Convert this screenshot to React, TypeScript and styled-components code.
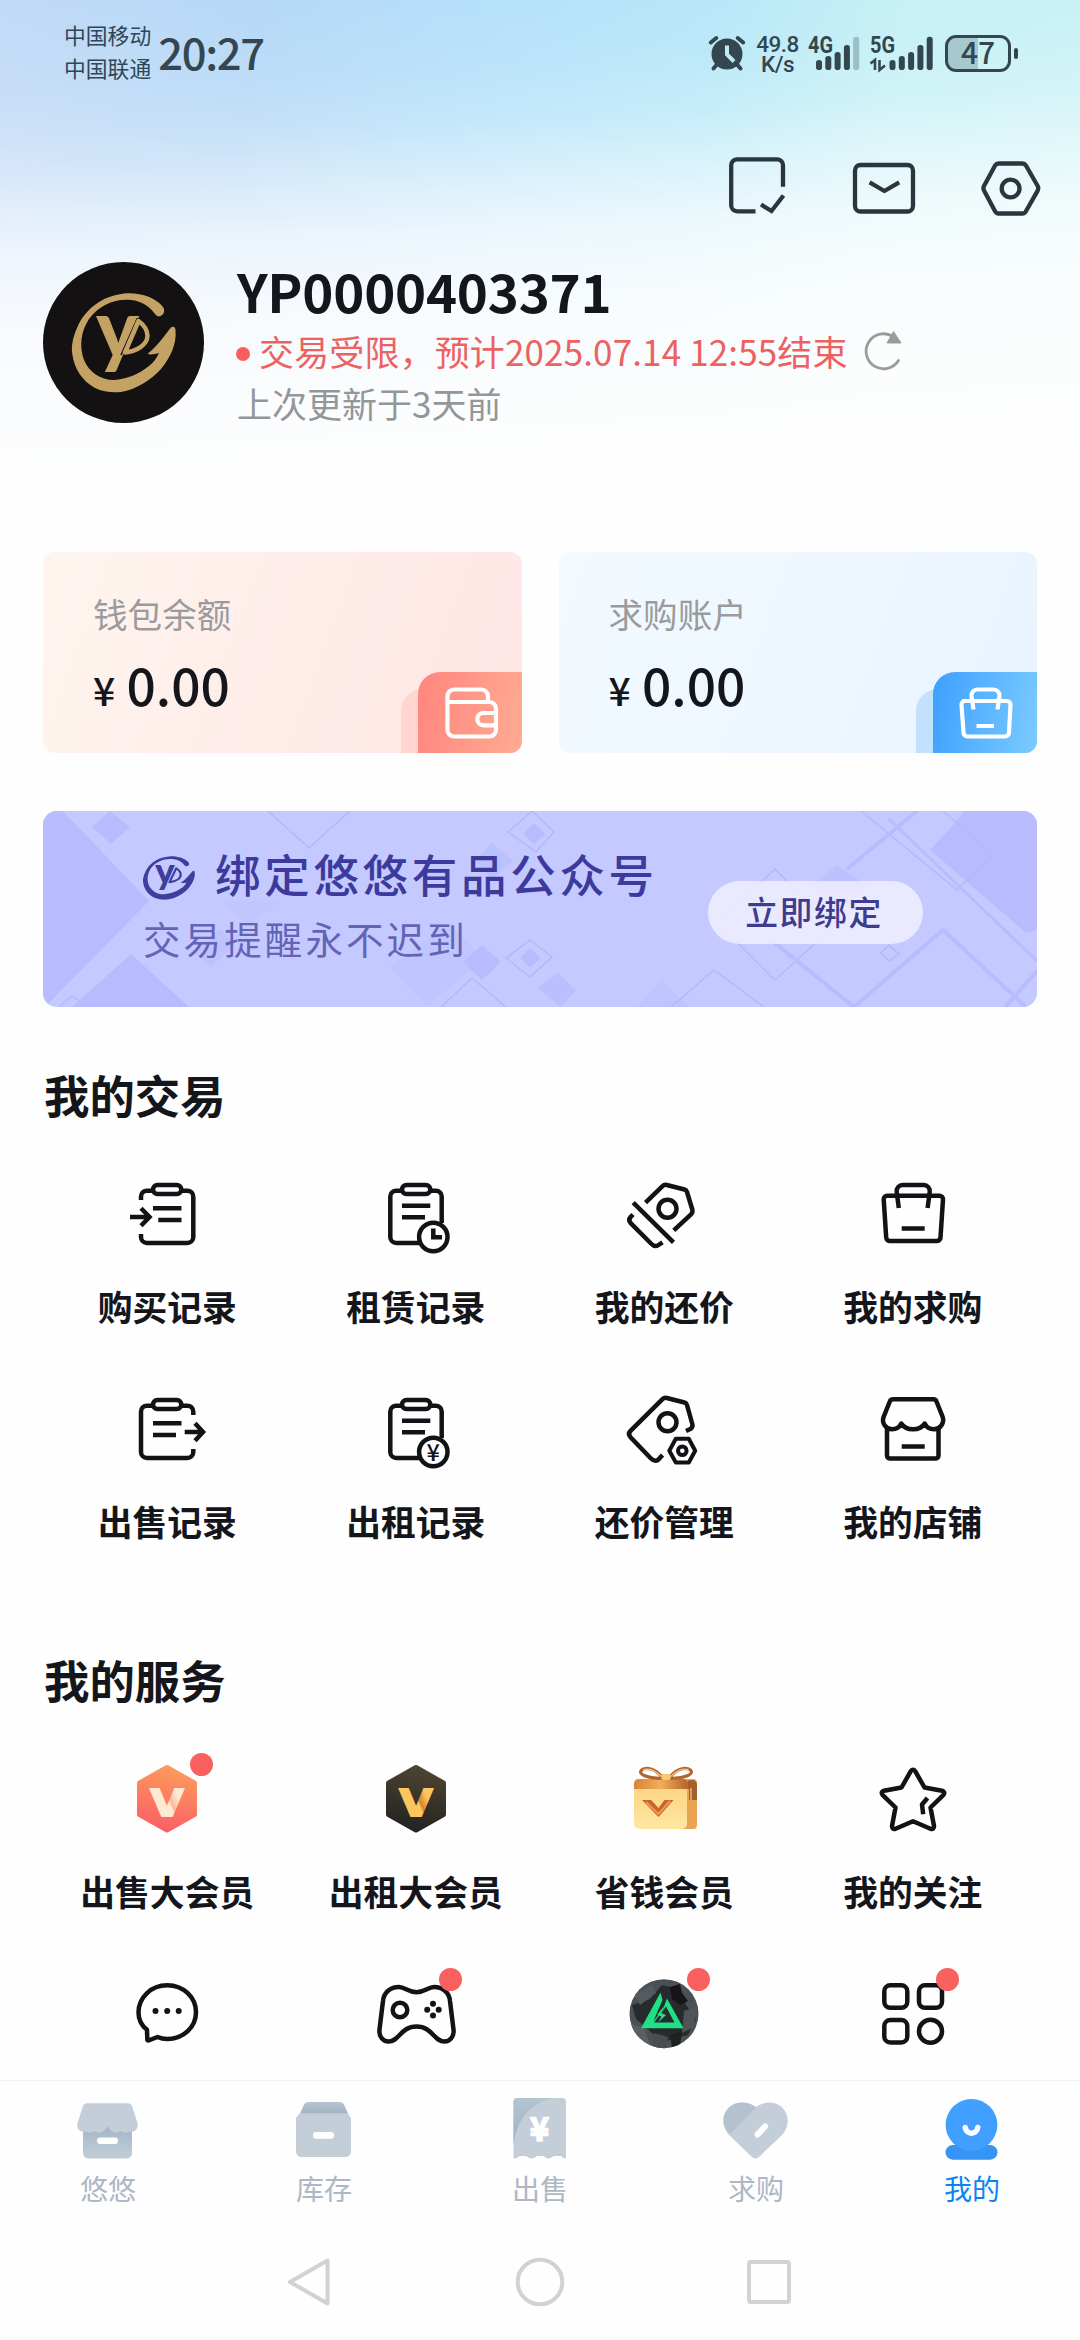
import React from "react";
import styled, { createGlobalStyle } from "styled-components";

const GlobalStyle = createGlobalStyle`
  * { box-sizing: border-box; }
  body {
    margin: 0;
    background: #fff;
    font-family: "Noto Sans CJK SC", "Noto Sans", sans-serif;
    color: #14161b;
  }
  svg { display: block; flex: none; overflow: visible; }
`;

/* ---------- page shell ---------- */

const Screen = styled.div`
  width: 1080px;
  height: 2340px;
  display: flex;
  flex-direction: column;
  overflow: hidden;
  background: #fefefe;
`;

const Content = styled.main`
  height: 2080px;
  flex: none;
  overflow: hidden;
  background:
    linear-gradient(177deg, rgba(254, 254, 254, 0) 0, rgba(254, 254, 254, 0.1) 90px, rgba(254, 254, 254, 0.24) 145px, rgba(254, 254, 254, 0.5) 200px, rgba(254, 254, 254, 0.75) 255px, rgba(254, 254, 254, 0.9) 330px, #fefefe 500px),
    linear-gradient(97deg, #c1daf6 0, #b5d8f6 260px, #b3e1fa 520px, #b5e7f8 720px, #c3f0f5 900px, #c6f1f5 1080px);
`;

/* ---------- system status bar ---------- */

const StatusBar = styled.header`
  height: 106px;
  padding: 0 62px 0 64px;
  display: flex;
  align-items: center;
  color: #34464f;
`;

const Carriers = styled.div`
  display: flex;
  flex-direction: column;
  padding-bottom: 4px;
  font-size: 21.8px;
  line-height: 33px;
  color: #2f4658;
`;

const Clock = styled.div`
  margin-left: 7px;
  padding-bottom: 3px;
  font-size: 43.5px;
  line-height: 50px;
  font-weight: 500;
  letter-spacing: -1.3px;
`;

const StatusIcons = styled.div`
  margin-left: auto;
  display: flex;
  align-items: center;
  gap: 10px;
`;

const Speed = styled.div`
  width: 41px;
  padding-top: 2px;
  display: flex;
  flex-direction: column;
  align-items: center;
  font-family: Roboto, sans-serif;
  font-size: 22.5px;
  line-height: 20.5px;
  font-weight: 500;
  letter-spacing: -0.5px;
  white-space: nowrap;
`;

const Battery = styled.div`
  display: flex;
  align-items: center;
  gap: 3px;
`;

const BatteryBody = styled.div`
  width: 66px;
  height: 37px;
  border: 3px solid #34464f;
  border-radius: 11px;
  display: flex;
  align-items: center;
  justify-content: center;
  background: linear-gradient(90deg, #a5c9cf 0 50%, transparent 50%);
  font-size: 30px;
  font-weight: 500;
  line-height: 30px;
  padding-bottom: 4px;
`;

const BatteryNub = styled.div`
  width: 4px;
  height: 11px;
  border-radius: 2px;
  background: #34464f;
`;

/* ---------- header ---------- */

const Actions = styled.div`
  padding: 49px 37px 0 0;
  display: flex;
  justify-content: flex-end;
  gap: 63px;
`;

const Profile = styled.section`
  height: 161px;
  margin-top: 43px;
  padding-left: 43px;
  display: flex;
  gap: 33px;
`;

const Avatar = styled.div`
  width: 161px;
  height: 161px;
  border-radius: 50%;
  background: #131112;
  overflow: hidden;
`;

const ProfileText = styled.div`
  display: flex;
  flex-direction: column;
`;

const UserName = styled.h1`
  margin: 0;
  font-size: 52.8px;
  line-height: 56px;
  font-weight: 700;
  letter-spacing: -0.25px;
`;

const Restriction = styled.div`
  margin-top: 11px;
  height: 44px;
  display: flex;
  align-items: center;
  font-size: 35px;
  line-height: 44px;
  letter-spacing: 0.14px;
  white-space: nowrap;
  color: #ec6161;
`;

const StatusDot = styled.span`
  width: 14px;
  height: 14px;
  margin: 5px 9px 0 -1px;
  border-radius: 50%;
  background: #fa5f60;
`;

const Updated = styled.div`
  margin-top: 8px;
  font-size: 35px;
  line-height: 44px;
  color: #949698;
`;

/* ---------- balance cards ---------- */

const Balances = styled.section`
  margin: 129px 43px 0;
  display: grid;
  grid-template-columns: 1fr 1fr;
  gap: 37px;
`;

const BalanceCard = styled.article<{ $bg: string }>`
  position: relative;
  height: 201px;
  padding: 38px 50px 0;
  border-radius: 12px;
  overflow: hidden;
  background: ${(p) => p.$bg};
`;

const BalanceLabel = styled.div`
  font-size: 34.6px;
  line-height: 46px;
  color: #9b9b9d;
`;

const Amount = styled.div`
  margin-top: 16px;
  display: flex;
  align-items: baseline;
  font-size: 51.5px;
  line-height: 64px;
  font-weight: 500;
`;

const Currency = styled.span`
  width: 33.5px;
  font-size: 39px;
`;

const CornerShade = styled.div<{ $bg: string }>`
  position: absolute;
  right: 0;
  bottom: 0;
  width: 121px;
  height: 64px;
  border-top-left-radius: 22px;
  background: ${(p) => p.$bg};
`;

const CornerTile = styled.div<{ $bg: string }>`
  position: absolute;
  right: 0;
  bottom: 0;
  width: 104px;
  height: 81px;
  border-top-left-radius: 22px;
  background: ${(p) => p.$bg};
`;

/* ---------- banner ---------- */

const Banner = styled.section`
  position: relative;
  margin: 58px 43px 0;
  height: 196px;
  border-radius: 14px;
  overflow: hidden;
  background: #c4caff;
  display: flex;
  align-items: center;
`;

const BannerPattern = styled.svg`
  position: absolute;
  inset: 0;
`;

const BannerText = styled.div`
  position: relative;
  margin-left: 100px;
  width: 565px;
  padding-bottom: 9px;
`;

const BannerTitle = styled.div`
  display: flex;
  align-items: center;
  gap: 20px;
  font-size: 45.5px;
  line-height: 60px;
  font-weight: 500;
  letter-spacing: 3.7px;
  white-space: nowrap;
  color: #3c3a9c;
`;

const BannerMark = styled.div`
  padding-top: 10px;
`;

const BannerSub = styled.div`
  margin-top: 7px;
  font-size: 37.5px;
  line-height: 56px;
  letter-spacing: 3.1px;
  color: #6463b6;
`;

const BannerButton = styled.button`
  position: relative;
  width: 215px;
  height: 63px;
  margin-top: 7px;
  padding: 0 3px 4px 0;
  border: 0;
  border-radius: 32px;
  background: rgba(243, 244, 255, 0.78);
  font-family: inherit;
  font-size: 32.8px;
  line-height: 40px;
  font-weight: 500;
  letter-spacing: 1.6px;
  color: #3f3b8d;
`;

/* ---------- shortcut grids ---------- */

const SectionTitle = styled.h2<{ $top: number }>`
  margin: ${(p) => p.$top}px 0 0 44px;
  font-size: 45.4px;
  line-height: 60px;
  font-weight: 700;
`;

const Grid = styled.div`
  margin: 51px 43px 0;
  display: grid;
  grid-template-columns: repeat(4, 1fr);
  grid-auto-rows: 215px;
`;

const Cell = styled.div`
  display: flex;
  flex-direction: column;
  align-items: center;
  gap: 27px;
`;

const IconBox = styled.div`
  position: relative;
  width: 84px;
  height: 84px;
`;

const Badge = styled.span`
  position: absolute;
  top: -7px;
  left: 65px;
  width: 23px;
  height: 23px;
  border-radius: 50%;
  background: #f96060;
`;

const CellLabel = styled.div`
  font-size: 34.8px;
  line-height: 40px;
  font-weight: 700;
  white-space: nowrap;
`;

/* ---------- bottom bars ---------- */

const TabBar = styled.nav`
  height: 144px;
  border-top: 1px solid #f1f2f4;
  display: grid;
  grid-template-columns: repeat(5, 1fr);
`;

const Tab = styled.div<{ $active?: boolean }>`
  padding-top: 11px;
  display: flex;
  flex-direction: column;
  align-items: center;
  gap: 7px;
  font-size: 28px;
  line-height: 34px;
  color: ${(p) => (p.$active ? "#0b84f3" : "#adb7c5")};
`;

const NavBar = styled.footer`
  height: 116px;
  padding: 0 285px;
  display: flex;
  align-items: center;
  justify-content: space-between;
`;

/* ---------- drawings ---------- */

const line = {
  fill: "none",
  stroke: "#121316",
  strokeWidth: 4.5,
  strokeLinejoin: "round" as const,
};

const Icon84 = ({ children }: { children: React.ReactNode }) => (
  <svg width="84" height="84" viewBox="0 0 84 84" {...line}>
    {children}
  </svg>
);

const Logo = ({ size, color, cut, full }: { size: [number, number]; color: string; cut: string; full?: boolean }) => (
  <svg width={size[0]} height={size[1]} viewBox={full ? "0 0 161 161" : "29 31 104 100"} preserveAspectRatio="none">
    <path
      fill={color}
      d="M119 53C122 51 121.500 47 120 45C113 36 99 31 85 31.300C74 32 64 35 56 40C45 47 38 56 34 66C30 75 28 84 29.300 92C31 106 39 119 52 126C60 130 70 131 78 130C93 127.500 108 118 118 107C127 96 134 82 132.500 68C132.300 64 129 64 127.500 66C120 76 113 85 104.500 92C108 93 113 92 116 91C113 97 110 101 106 104C96 112 84 117 71 118C57 118 46 110 41 98C36 84 38 69 46 57C56 43 73 36 88 38C99 39 107 45 112 52C114 55 117 55 119 53Z"
    />
    <text
      x="53"
      y="95.500"
      fontFamily="Lato, sans-serif"
      fontWeight="900"
      fontSize="81"
      textLength="43"
      lengthAdjust="spacingAndGlyphs"
      fill={color}
    >
      y
    </text>
    <path d="M94.500 56L78 93" stroke={cut} strokeWidth="1.500" />
    <path d="M95.500 59C101 63 104.500 68 104.500 74C104 83 94 89 82 90.500Z" fill={cut} stroke={color} strokeWidth="4.500" strokeLinejoin="round" />
  </svg>
);

const AlarmIcon = () => (
  <svg width="39" height="38" viewBox="0 0 39 38">
    <g fill="none" stroke="#34464f" strokeLinecap="round">
      <circle cx="19" cy="20" r="15.500" fill="#34464f" stroke="none" />
      <path d="M2.800 8.500L8.300 4M35.200 8.500L29.700 4" strokeWidth="4" />
      <path d="M8.500 31L5.500 34.500M29.500 31L32.500 34.500" strokeWidth="4" />
      <path d="M19 11.500V20.500L26 27.500" stroke="#bfe9f5" strokeWidth="4" strokeLinecap="butt" />
    </g>
  </svg>
);

const BAR_HEIGHTS = [10, 14, 18, 25, 33.3];

const Signal = ({ label, width, offset, faded, arrows }: { label: string; width: number; offset: number; faded?: boolean; arrows?: boolean }) => (
  <svg width={width} height="36" viewBox={`0 0 ${width} 36`}>
    <text x="0" y="18" fontFamily="Roboto, sans-serif" fontWeight="700" fontSize="23" textLength="25" lengthAdjust="spacingAndGlyphs" fill="#34464f">
      {label}
    </text>
    {BAR_HEIGHTS.map((h, i) => (
      <rect key={i} x={offset + i * 9.3} y={35 - h} width="6" height={h} rx="2.800" fill={faded && i === 4 ? "#9bbfc8" : "#34464f"} />
    ))}
    {arrows && (
      <path d="M0.500 28.500L5 25V35M9.500 25V35L15 30.500" fill="none" stroke="#34464f" strokeWidth="2.600" />
    )}
  </svg>
);

const HeaderIcon = ({ children }: { children: React.ReactNode }) => (
  <svg width="64" height="64" viewBox="0 0 64 64" fill="none" stroke="#2b353e" strokeWidth="4.300" strokeLinejoin="round">
    {children}
  </svg>
);

const RefreshSvg = styled.svg`
  margin-left: 16px;
`;

const RefreshIcon = () => (
  <RefreshSvg width="40" height="42" viewBox="0 0 40 42">
    <path d="M34.500 30.500A17.500 17.500 0 1 1 29 6.500" fill="none" stroke="#9b9b9b" strokeWidth="2.800" strokeLinecap="round" />
    <path d="M29.500 1.500L37 13H23Z" fill="#9b9b9b" stroke="#9b9b9b" strokeWidth="1" strokeLinejoin="round" />
  </RefreshSvg>
);

const cardStroke = { fill: "none", stroke: "#fff", strokeWidth: 4.2, strokeLinejoin: "round" as const };

const WalletIcon = () => (
  <svg width="104" height="81" viewBox="0 0 104 81" {...cardStroke}>
    <path d="M29.500 30V24a6.500 6.500 0 0 1 6.500-6.500H63.500a6.500 6.500 0 0 1 6.500 6.500V30" />
    <path d="M29.500 30H71.500a6.500 6.500 0 0 1 6.500 6.500V58a6.500 6.500 0 0 1-6.500 6.500H36a6.500 6.500 0 0 1-6.500-6.500Z" />
    <path d="M78 41H65.500a6.200 6.200 0 0 0 0 12.400H78" />
  </svg>
);

const WhiteBagIcon = () => (
  <svg width="104" height="81" viewBox="0 0 104 81" {...cardStroke}>
    <path d="M30.500 29H74a3.500 3.500 0 0 1 3.500 3.700L76 60.500a4 4 0 0 1-4 4H34.500a4 4 0 0 1-4-4L28.500 32.700a3.500 3.500 0 0 1 3.500-3.700Z" />
    <path d="M40.500 37.500L38.500 24a6 6 0 0 1 6-6.500H60.500a6 6 0 0 1 6 6.500L64.500 37.500" />
    <path d="M43.500 54H61" />
  </svg>
);

const Pattern = () => (
  <BannerPattern width="994" height="196" viewBox="0 0 994 196">
    <g fill="#b8bcfe">
      <path d="M0 0H20L106 90L6 192L0 196Z" />
      <path d="M67 0L87 16L68 33L49 16Z" />
      <path d="M88 143L146 196H29Z" />
      <path d="M491 12L503 23L491 33L480 23Z" />
      <path d="M449 32L470 50L449 68L432 49Z" opacity=".7" />
      <path d="M439 134L458 151L439 169L420 151Z" />
      <path d="M515 162L533 179L518 196L494 177Z" opacity=".8" />
      <path d="M487 137L498 147L487 157L477 147Z" />
      <path d="M405 112L440 148L384 196L346 156Z" opacity=".35" />
      <path d="M178 90H238L206 114Z" opacity=".25" />
      <path d="M150 140L178 118L192 134L168 156Z" opacity=".5" />
      <path d="M618 169L646 196H594Z" opacity=".4" />
      <path d="M794 54L826 76L794 100L768 76Z" opacity=".7" />
      <path d="M921 0H994V119L983 122L887 39L912 12Z" />
    </g>
    <g fill="none" stroke="#b4b8f7" strokeWidth="1.500">
      <path d="M225 0L266 37L307 0" />
      <path d="M489 0L511 21L493 41L465 21Z" />
      <path d="M487 129L509 146L487 166L463 147Z" />
      <path d="M429 167L463 196M429 167L398 196" />
      <path d="M732 58L790 116L732 169L675 112Z" />
      <path d="M671 159L721 196M671 159L628 196" />
      <path d="M818 0L914 79L950 44L900 0" />
      <path d="M16 196L29 185L38 191" />
      <path d="M846 134L856 143L846 150L838 142Z" />
    </g>
    <g fill="none" stroke="#b8bcfe" strokeWidth="4">
      <path d="M874 0L804 58" />
      <path d="M728 129L811 196L900 119L983 196" />
      <path d="M846 8L994 150" strokeWidth="3" />
      <path d="M994 160L962 196" />
    </g>
  </BannerPattern>
);

const Clip = ({ x = 28 }: { x?: number }) => <rect x={x} y="10" width="28.300" height="9" rx="4.500" />;

const BuyRecord = () => (
  <Icon84>
    <path d="M27.500 15.700H22a6 6 0 0 0-6 6V25M16 59v3a6 6 0 0 0 6 6H62.300a6 6 0 0 0 6-6V21.700a6 6 0 0 0-6-6H56.500" />
    <Clip />
    <path d="M28 33.300H56.500M33.300 45H56.500M5 42H23" />
    <path d="M16 33.300L24.500 42L16 50.700" strokeLinejoin="miter" />
  </Icon84>
);

const SellRecord = () => (
  <Icon84>
    <path d="M56.500 15.700H62.300a6 6 0 0 1 6 6V25M68.300 59v3a6 6 0 0 1-6 6H22a6 6 0 0 1-6-6V21.700a6 6 0 0 1 6-6H27.500" />
    <Clip />
    <path d="M28 33.300H56.500M28 45H51M59.700 42H77" />
    <path d="M70 33.300L78 42L70 50.700" strokeLinejoin="miter" />
  </Icon84>
);

const RentBase = ({ children }: { children: React.ReactNode }) => (
  <Icon84>
    <path d="M28 15.700H22.300a6 6 0 0 0-6 6V62a6 6 0 0 0 6 6H46M67.700 48V21.700a6 6 0 0 0-6-6H56.500" />
    <Clip />
    <path d="M28 30.700H56.300M28 42.300H51" />
    <circle cx="59.300" cy="62" r="14.200" fill="#fefefe" />
    {children}
  </Icon84>
);

const LeaseRecord = () => (
  <RentBase>
    <path d="M59.300 53.500V62.300H68" strokeLinejoin="miter" />
  </RentBase>
);

const RentOutRecord = () => (
  <RentBase>
    <text x="59.300" y="70.500" textAnchor="middle" fontSize="23.500" fontWeight="500" fill="#121316" stroke="none">
      ¥
    </text>
  </RentBase>
);

const Bargain = () => (
  <Icon84>
    <path d="M23.500 27.700L40.500 11.200Q42.300 9.300 44.800 10L62.500 14.500Q64.500 15 65 17L70.300 34.500Q71 37.500 69 39.300L51.800 55.300" />
    <circle cx="45.500" cy="33.800" r="9" />
    <path d="M11.200 27.700L51.500 67.300" />
    <path d="M11 39.500L8.700 41.800Q5.800 45 8.700 48.200L29.500 69Q33 72.500 36.500 70L40.500 67.300" />
  </Icon84>
);

const BargainManage = () => (
  <Icon84>
    <path d="M64 41L68.800 38.800Q71 37 70.300 34L65 15Q64.500 13 62.500 12.500L44.800 8Q42.300 7.400 40.500 9.200L8.500 40.800Q5.500 44 8.500 47.200L29 68.500Q32.500 72 36 70L40.500 65" />
    <circle cx="45.500" cy="32.300" r="9" />
    <path d="M53.800 48.800H66.800L73.200 60.700L66.800 72.500H53.800L47.300 60.700Z" strokeWidth="4" />
    <circle cx="60.300" cy="60.700" r="4.300" strokeWidth="4" />
  </Icon84>
);

const Bag = () => (
  <Icon84>
    <path d="M16 20.700H68.500a3.500 3.500 0 0 1 3.500 3.700L69.500 62.500a3.800 3.800 0 0 1-3.800 3.600H19a3.800 3.800 0 0 1-3.800-3.600L12.700 24.400a3.500 3.500 0 0 1 3.500-3.700Z" />
    <path d="M27.800 33L25.700 17a6 6 0 0 1 6-7H52.700a6 6 0 0 1 6 7L56.600 33" />
    <path d="M30.700 53.500H53.700" />
  </Icon84>
);

const Shop = () => (
  <Icon84>
    <path d="M22 9.300H62.500Q64.800 9.300 65.500 11.500L71.500 26.500C74 33 69 39.300 63 39.300C58.500 39.300 55.500 37 53.700 33.500C51.500 37 47.500 39.300 42 39.300C36.500 39.300 32.500 37 30.300 33.500C28.500 37 25.500 39.300 21 39.300C15 39.300 10 33 12.800 26.500L18.800 11.500Q19.600 9.300 22 9.300Z" />
    <path d="M16 38V65.500a3 3 0 0 0 3 3H64.500a3 3 0 0 0 3-3V38M30.700 56.500H53.700" />
  </Icon84>
);

const Hexagon = ({ id, from, to, v1, v2 }: { id: string; from: string; to: string; v1: string; v2: string }) => (
  <svg width="84" height="84" viewBox="0 0 84 84">
    <defs>
      <linearGradient id={id} x1="0.600" y1="0" x2="0.400" y2="1">
        <stop offset="0" stopColor={from} />
        <stop offset="1" stopColor={to} />
      </linearGradient>
      <linearGradient id={`${id}v`} gradientUnits="userSpaceOnUse" x1="30" y1="47" x2="57" y2="35">
        <stop offset="0" stopColor={v1} />
        <stop offset=".5" stopColor={v1} />
        <stop offset=".56" stopColor={v2} />
        <stop offset=".85" stopColor={v1} />
      </linearGradient>
    </defs>
    <path
      d="M42 7.500L69.500 23V54.500L42 70L14.500 54.500V23Z"
      fill={`url(#${id})`}
      stroke={`url(#${id})`}
      strokeWidth="5"
      strokeLinejoin="round"
    />
    <text
      x="25.500"
      y="55.500"
      fontFamily="'DejaVu Sans', sans-serif"
      fontWeight="700"
      fontSize="37.500"
      textLength="33"
      lengthAdjust="spacingAndGlyphs"
      fill={`url(#${id}v)`}
      stroke={`url(#${id}v)`}
      strokeWidth="2"
    >
      V
    </text>
  </svg>
);

const Gift = () => (
  <svg width="84" height="84" viewBox="0 0 84 84">
    <defs>
      <linearGradient id="giftFace" x1="0" y1="0" x2="0" y2="1">
        <stop offset="0" stopColor="#fdd181" />
        <stop offset="1" stopColor="#ffe7a0" />
      </linearGradient>
      <linearGradient id="giftLid" x1="0" y1="0" x2="1" y2="0">
        <stop offset="0" stopColor="#d98338" />
        <stop offset=".5" stopColor="#f1ad5c" />
        <stop offset="1" stopColor="#b8642b" />
      </linearGradient>
    </defs>
    <path d="M60 19H71a4 4 0 0 1 4 4V65a4 4 0 0 1-4 4H58Z" fill="#e9a352" />
    <rect x="12" y="20" width="53" height="49" rx="5" fill="url(#giftFace)" />
    <path d="M12 29V23.500a4.500 4.500 0 0 1 4.500-4.500H61a4.500 4.500 0 0 1 4.500 4.500V29Z" fill="url(#giftLid)" />
    <path d="M65.500 29V20.500L71 20Q75 21 75 25V40H67V29Z" fill="#a5602f" />
    <path d="M69 28V40" stroke="#f0b468" strokeWidth="1.500" />
    <path d="M40 17C33 8 24 7 19.500 10C16 14 23 18 40 18.500ZM48 17C55 8 64 7 68.500 10C72 14 65 18 48 18.500Z" fill="none" stroke="#b4642f" strokeWidth="3.200" />
    <path d="M40 17C33 10 26 8 21 10M48 17C55 10 62 8 67 10" fill="none" stroke="#f7c384" strokeWidth="1.200" />
    <rect x="39.500" y="14" width="9" height="6" rx="1.500" fill="#fcc86f" />
    <path d="M20 40H29L36.500 48L42.500 40H51.500L36.500 57Z" fill="#c9642b" />
    <path d="M24 42L36.500 54L48 41" fill="none" stroke="#ee9a4c" strokeWidth="2" />
  </svg>
);

const Star = () => (
  <Icon84>
    <path d="M39.800 11.200Q42 8.500 44.200 11.200L53.500 27.500L71 30.700Q74.500 32 72.500 34.800L59.500 47.500L63 66Q63 69.500 60 69L42 61.300L24 69Q21 69.500 21 66L24.500 47.500L11.500 34.800Q9.500 32 13 30.700L30.500 27.500Z" />
    <path d="M56.500 38L51 44.500L52.200 54.300" />
  </Icon84>
);

const Chat = () => (
  <Icon84>
    <path d="M22 54.800C15.800 50 13.500 44 13.500 37.500C13.500 22.500 26 10.300 42.200 10.300C58.500 10.300 71 22.500 71 37.200C71 52 58.500 64 42.200 64C38.800 64 35.500 63.300 32.500 62L23.500 65.500Q22.300 65.500 22.300 64Z" />
    <g fill="#121316" stroke="none">
      <circle cx="30.500" cy="36" r="3" />
      <circle cx="42.200" cy="36" r="3" />
      <circle cx="53.700" cy="36" r="3" />
    </g>
  </Icon84>
);

const Gamepad = () => (
  <Icon84>
    <path d="M25 12C31 12 34 17.200 42.500 17.200C51 17.200 54 12 60 12C68.500 12 75.300 17.500 76 26L79.500 54.500C80.300 61.500 76 66.500 70.500 66.500C59.500 66.500 58.500 51.500 42.500 51.500C26.500 51.500 25.500 66.500 14.500 66.500C9 66.500 4.700 61.500 5.500 54.500L9 26C9.700 17.500 16.500 12 25 12Z" />
    <circle cx="26" cy="35" r="7.300" />
    <g fill="#121316" stroke="none">
      <circle cx="59" cy="28.800" r="3" />
      <circle cx="53.200" cy="34.700" r="3" />
      <circle cx="64.700" cy="34.700" r="3" />
      <circle cx="59" cy="40.600" r="3" />
    </g>
  </Icon84>
);

const Emblem = () => (
  <svg width="84" height="84" viewBox="0 0 84 84">
    <defs>
      <clipPath id="emblemClip">
        <circle cx="42" cy="38.700" r="34.500" />
      </clipPath>
    </defs>
    <g clipPath="url(#emblemClip)">
      <rect x="7" y="4" width="70" height="70" fill="#4a5054" />
      <path d="M10 30L28 24L40 10L58 14L64 30L74 44L66 60L44 66L30 58L14 44Z" fill="#272b2e" />
      <path d="M48 12L58 9L60 18L66 26L58 30L50 24Z" fill="#171516" />
      <path d="M62 36L74 32L72 52L60 58Z" fill="#505456" />
      <path d="M8 48L22 54L30 74H12Z" fill="#5c5f60" />
      <path d="M32 58L46 62L44 74H30Z" fill="#4a4d4c" />
      <path d="M48 60L60 56L58 72L50 74Z" fill="#1f2121" />
      <path d="M12 20L30 10L34 18L18 30Z" fill="#545b60" />
    </g>
    <path
      d="M38.500 17.500L40.500 25L31.500 46L41 34L45 23.500L61.500 53.300H19Z"
      fill="#1fe082"
    />
    <path d="M44 31.500L52.500 47.500H32Z" fill="#272b2e" />
    <path d="M42 31L39 38L44 40L36 47.500L39.500 41.500L35 40Z" fill="#1fe082" />
  </svg>
);

const Apps = () => (
  <Icon84>
    <rect x="13.300" y="10.300" width="23" height="22.500" rx="6" />
    <rect x="48" y="10.300" width="23" height="22.500" rx="6" />
    <rect x="13.300" y="45" width="23" height="22.500" rx="6" />
    <circle cx="59.500" cy="56.300" r="11.500" />
  </Icon84>
);

const TabIcon = ({ children }: { children: React.ReactNode }) => (
  <svg width="72" height="72" viewBox="0 0 72 72">
    <defs>
      <linearGradient id="shade" x1="0" y1="0" x2="0" y2="1">
        <stop offset="0" stopColor="#a3b4c5" />
        <stop offset="1" stopColor="#c2cdd9" />
      </linearGradient>
      <linearGradient id="shadeTop" x1="0" y1="0" x2="0" y2="1">
        <stop offset="0" stopColor="#b6c4d1" />
        <stop offset="1" stopColor="#9db1c2" />
      </linearGradient>
    </defs>
    {children}
  </svg>
);

const ShopTab = () => (
  <TabIcon>
    <path d="M11 32H60V61a5.500 5.500 0 0 1-5.500 5.500H16.500A5.500 5.500 0 0 1 11 61Z" fill="url(#shade)" />
    <path d="M15.500 11.300H55.500Q59 11.300 60.200 14.500L65.500 31C67 37 62 41 57 39.500Q54 42 49 39Q44 42 40 39.500Q37 38 35.500 34Q34 38 31 39.500Q27 42 22 39Q17 42 14 39.500C9 41 4 37 5.500 31L10.800 14.500Q12 11.300 15.500 11.300Z" fill="#c3ced9" />
    <rect x="25" y="45.500" width="21" height="6.500" rx="3" fill="#fff" />
  </TabIcon>
);

const StockTab = () => (
  <TabIcon>
    <path d="M20.500 10H51.500Q54.800 10 56 12.500L61 24H11L16 12.500Q17.200 10 20.500 10Z" fill="url(#shadeTop)" />
    <path d="M11.500 21.300H59.500L63 26V59.500a5.500 5.500 0 0 1-5.500 5.500H13.500A5.500 5.500 0 0 1 8 59.500V26Z" fill="#c3ced9" />
    <rect x="25" y="40" width="21" height="6.700" rx="3" fill="#fff" />
  </TabIcon>
);

const SellTab = () => (
  <TabIcon>
    <path d="M13.500 6H58a4 4 0 0 1 4 4V66.500Q58.500 66 57 64H50Q47 66 44.500 66.500Q42 66 39.500 64H33Q30 66.500 27.500 66.500Q24.500 66 22 64H15.500Q13 66.500 9.500 66.500V10a4 4 0 0 1 4-4Z" fill="#c3ced9" />
    <path d="M13.500 6H48C27 11 12 28 9.500 54V10a4 4 0 0 1 4-4Z" fill="url(#shadeTop)" />
    <text x="35.500" y="48.500" textAnchor="middle" fontSize="33" fontWeight="700" fill="#fff" stroke="#fff" strokeWidth="1.500" strokeLinejoin="round">
      ¥
    </text>
  </TabIcon>
);

const HeartTab = () => (
  <TabIcon>
    <path d="M39.500 64.500Q35.500 68.500 31.500 64.500L8.500 42.500C-6 25 13 0 35.800 15C59 0 77 25 62.500 42.500Z" fill="#c3ced9" />
    <path d="M36.200 15.200L10.800 41.500L8.500 40C-6 25 13 0 36.200 15.200Z" fill="#b5c1ce" />
    <path d="M37.500 42.500L45 34.500" stroke="#fff" strokeWidth="6" strokeLinecap="round" />
  </TabIcon>
);

const MeTab = () => (
  <TabIcon>
    <rect x="9.500" y="53" width="52" height="14.700" rx="7.300" fill="#3594f4" />
    <circle cx="35.500" cy="32.900" r="25.900" fill="#409fff" />
    <path d="M29.300 35.500C30 43 41 43 41.700 35.500" fill="none" stroke="#fff" strokeWidth="5.500" strokeLinecap="round" />
  </TabIcon>
);

/* ---------- data ---------- */

type Entry = { label?: string; icon: React.ReactNode; badge?: boolean };

const trades: Entry[] = [
  { label: "购买记录", icon: <BuyRecord /> },
  { label: "租赁记录", icon: <LeaseRecord /> },
  { label: "我的还价", icon: <Bargain /> },
  { label: "我的求购", icon: <Bag /> },
  { label: "出售记录", icon: <SellRecord /> },
  { label: "出租记录", icon: <RentOutRecord /> },
  { label: "还价管理", icon: <BargainManage /> },
  { label: "我的店铺", icon: <Shop /> },
];

const services: Entry[] = [
  { label: "出售大会员", icon: <Hexagon id="hexSell" from="#fd9a5c" to="#fb6066" v1="#ffe9d3" v2="#fdb799" />, badge: true },
  { label: "出租大会员", icon: <Hexagon id="hexRent" from="#4d4431" to="#242321" v1="#fcc65e" v2="#d9822f" /> },
  { label: "省钱会员", icon: <Gift /> },
  { label: "我的关注", icon: <Star /> },
  { icon: <Chat /> },
  { icon: <Gamepad />, badge: true },
  { icon: <Emblem />, badge: true },
  { icon: <Apps />, badge: true },
];

const tabs = [
  { label: "悠悠", icon: <ShopTab /> },
  { label: "库存", icon: <StockTab /> },
  { label: "出售", icon: <SellTab /> },
  { label: "求购", icon: <HeartTab /> },
  { label: "我的", icon: <MeTab />, active: true },
];

const ShortcutGrid = ({ items }: { items: Entry[] }) => (
  <Grid>
    {items.map((item, i) => (
      <Cell key={i}>
        <IconBox>
          {item.icon}
          {item.badge && <Badge />}
        </IconBox>
        {item.label && <CellLabel>{item.label}</CellLabel>}
      </Cell>
    ))}
  </Grid>
);

export default function App() {
  return (
    <>
      <GlobalStyle />
      <Screen>
        <Content>
          <StatusBar>
            <Carriers>
              <span>中国移动</span>
              <span>中国联通</span>
            </Carriers>
            <Clock>20:27</Clock>
            <StatusIcons>
              <AlarmIcon />
              <Speed>
                <span>49.8</span>
                <span>K/s</span>
              </Speed>
              <Signal label="4G" width={52} offset={8} faded />
              <Signal label="5G" width={65} offset={19.5} arrows />
              <Battery>
                <BatteryBody>47</BatteryBody>
                <BatteryNub />
              </Battery>
            </StatusIcons>
          </StatusBar>

          <Actions>
            <HeaderIcon>
              <path d="M58 31.700V10.300a6 6 0 0 0-6-6H12.200a6 6 0 0 0-6 6V50.300a6 6 0 0 0 6 6H30.500" />
              <path d="M36 49.500L46.500 56L58.500 40.500" strokeLinejoin="miter" />
            </HeaderIcon>
            <HeaderIcon>
              <rect x="3" y="10" width="58" height="46.500" rx="5.500" />
              <path d="M17.600 27.300L32.400 36L47.200 27.300" />
            </HeaderIcon>
            <HeaderIcon>
              <path d="M19.500 8.500H43.500Q45.700 8.500 46.800 10.300L58.700 31Q59.800 33.300 58.700 35.600L46.800 56.500Q45.700 58.500 43.500 58.500H19.500Q17.300 58.500 16.200 56.500L5 35.600Q3.900 33.300 5 31L16.200 10.300Q17.300 8.500 19.500 8.500Z" />
              <circle cx="31.600" cy="33.500" r="8.900" />
            </HeaderIcon>
          </Actions>

          <Profile>
            <Avatar>
              <Logo size={[161, 161]} color="#c4a264" cut="#131112" full />
            </Avatar>
            <ProfileText>
              <UserName>YP0000403371</UserName>
              <Restriction>
                <StatusDot />
                <span>交易受限，预计2025.07.14 12:55结束</span>
                <RefreshIcon />
              </Restriction>
              <Updated>上次更新于3天前</Updated>
            </ProfileText>
          </Profile>

          <Balances>
            <BalanceCard $bg="linear-gradient(110deg, #fff5ef 0%, #feece9 55%, #ffe6e5 100%)">
              <BalanceLabel>钱包余额</BalanceLabel>
              <Amount>
                <Currency>¥</Currency>0.00
              </Amount>
              <CornerShade $bg="#ffd5d0" />
              <CornerTile $bg="linear-gradient(100deg, #ff857e, #ffab92)">
                <WalletIcon />
              </CornerTile>
            </BalanceCard>
            <BalanceCard $bg="linear-gradient(110deg, #f2faff 0%, #eef7ff 55%, #e8f3ff 100%)">
              <BalanceLabel>求购账户</BalanceLabel>
              <Amount>
                <Currency>¥</Currency>0.00
              </Amount>
              <CornerShade $bg="#c3e1fc" />
              <CornerTile $bg="linear-gradient(100deg, #3d9fff, #7bcbff)">
                <WhiteBagIcon />
              </CornerTile>
            </BalanceCard>
          </Balances>

          <Banner>
            <Pattern />
            <BannerText>
              <BannerTitle>
                <BannerMark>
                  <Logo size={[52, 44]} color="#403e9d" cut="#c4caff" />
                </BannerMark>
                <span>绑定悠悠有品公众号</span>
              </BannerTitle>
              <BannerSub>交易提醒永不迟到</BannerSub>
            </BannerText>
            <BannerButton>立即绑定</BannerButton>
          </Banner>

          <SectionTitle $top={57}>我的交易</SectionTitle>
          <ShortcutGrid items={trades} />
          <SectionTitle $top={44}>我的服务</SectionTitle>
          <ShortcutGrid items={services} />
        </Content>

        <TabBar>
          {tabs.map((tab) => (
            <Tab key={tab.label} $active={tab.active}>
              {tab.icon}
              {tab.label}
            </Tab>
          ))}
        </TabBar>

        <NavBar>
          <svg width="48" height="52" viewBox="0 0 48 52" fill="none" stroke="#d2d2d2" strokeWidth="4" strokeLinejoin="round">
            <path d="M42.500 4.500V47.500L5 26Z" />
          </svg>
          <svg width="52" height="52" viewBox="0 0 52 52" fill="none" stroke="#d2d2d2" strokeWidth="4">
            <circle cx="27" cy="26" r="22.300" />
          </svg>
          <svg width="50" height="52" viewBox="0 0 50 52" fill="none" stroke="#d2d2d2" strokeWidth="4">
            <rect x="4" y="6" width="40" height="40" rx="2" />
          </svg>
        </NavBar>
      </Screen>
    </>
  );
}
